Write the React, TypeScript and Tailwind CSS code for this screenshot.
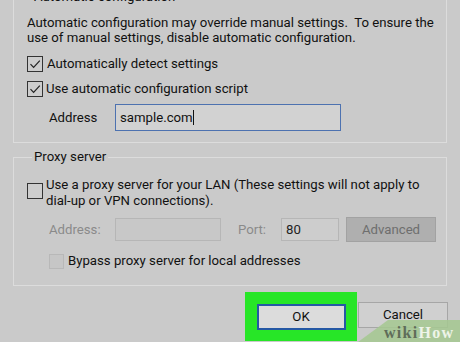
import React from "react";

const font = { fontFamily: 'Roboto, "Noto Sans", sans-serif' };

function Check({ checked, disabled }: { checked?: boolean; disabled?: boolean }) {
  return (
    <div
      className={`shrink-0 border flex items-center justify-center ${
        disabled ? "w-[15px] h-[15px] border-[#b8b8b8] bg-[#c6c6c6]" : "w-[16px] h-[16px] border-[#333] bg-[#cdcdcd]"
      }`}
    >
      {checked && (
        <svg width="12" height="12" viewBox="0 0 12 12">
          <path d="M1.5 6.2 L4.6 9.3 L10.8 2.6" fill="none" stroke="#222" strokeWidth="1.2" />
        </svg>
      )}
    </div>
  );
}

export default function App() {
  return (
    <div
      className="relative w-[460px] h-[342px] overflow-hidden bg-[#cacaca] text-[#111] text-[13.2px] leading-[16px] whitespace-nowrap"
      style={font}
    >
      {/* Automatic configuration group */}
      <fieldset className="mx-[13px] -mt-[11px] h-[154px] border border-[#dcdcdc] pl-[13px] pr-[10px]">
        <legend className="ml-[5px] px-[2px] leading-[16px]">Automatic configuration</legend>
        <p className="mt-[10px] leading-[15px]">
          Automatic configuration may override manual settings.&nbsp; To ensure the
          <br />
          use of manual settings, disable automatic configuration.
        </p>
        <div className="mt-[11px] flex items-center gap-[4px]">
          <Check checked />
          <span>Automatically detect settings</span>
        </div>
        <div className="mt-[9px] flex items-center gap-[3px]">
          <Check checked />
          <span>Use automatic configuration script</span>
        </div>
        <div className="mt-[7px] flex items-center">
          <span className="w-[88px] pl-[22px]">Address</span>
          <div className="w-[226px] h-[27px] border border-[#4d72b0] bg-[#d2d2d2] flex items-center pl-[4px]">
            sample.com<span className="w-px h-[15px] bg-[#111]" />
          </div>
        </div>
      </fieldset>

      {/* Proxy server group */}
      <fieldset className="mx-[13px] mt-[6px] h-[137px] border border-[#dcdcdc] pl-[13px] pr-[10px]">
        <legend className="ml-[5px] px-[2px] leading-[16px]">Proxy server</legend>
        <div className="mt-[12px] flex items-start gap-[3px]">
          <div className="mt-[6px]">
            <Check />
          </div>
          <span className="leading-[16px]">
            Use a proxy server for your LAN (These settings will not apply to
            <br />
            dial-up or VPN connections).
          </span>
        </div>
        <div className="mt-[8px] flex items-center text-[#8a8a8a]">
          <span className="w-[88px] pl-[22px]">Address:</span>
          <div className="w-[106px] h-[23px] border border-[#b6b6b6] bg-[#c8c8c8]" />
          <span className="ml-[17px] w-[43px]">Port:</span>
          <div className="w-[58px] h-[23px] border border-[#b6b6b6] bg-[#cdcdcd] flex items-center pl-[4px] text-[#222]">
            80
          </div>
          <div className="ml-[7px] w-[90px] h-[25px] border border-[#a2a2a2] bg-[#afafaf] flex items-center justify-center text-[#6e6e6e]">
            Advanced
          </div>
        </div>
        <div className="mt-[11px] ml-[22px] flex items-center gap-[4px] text-[#111]">
          <Check disabled />
          <span>Bypass proxy server for local addresses</span>
        </div>
      </fieldset>

      {/* Buttons */}
      <div className="mt-[6px] flex items-start pl-[245px]">
        <div className="w-[112px] h-[49px] bg-[#27e627] flex items-center justify-center">
          <div className="w-[89px] h-[26px] border-2 border-[#2558a4] bg-[#dcdcdc] flex items-center justify-center">
            OK
          </div>
        </div>
        <div className="mt-[10px] ml-[1px] w-[90px] h-[26px] border border-[#a6a6a6] bg-[#d0d0d0] flex items-center justify-center">
          Cancel
        </div>
      </div>

      {/* wikiHow watermark */}
      <svg className="absolute left-0 top-0" width="460" height="342">
        <polygon points="358,342 388,320 460,320 460,342" fill="#a4c890" fillOpacity="0.85" />
      </svg>
      <div
        className="absolute left-[384px] top-[325px] text-[16px] leading-[16px] font-bold tracking-[1.3px]"
        style={{ fontFamily: '"Liberation Serif", serif' }}
      >
        <span className="text-[#5f6d59]">wiki</span>
        <span className="text-[#eef4e8]">How</span>
      </div>
    </div>
  );
}
